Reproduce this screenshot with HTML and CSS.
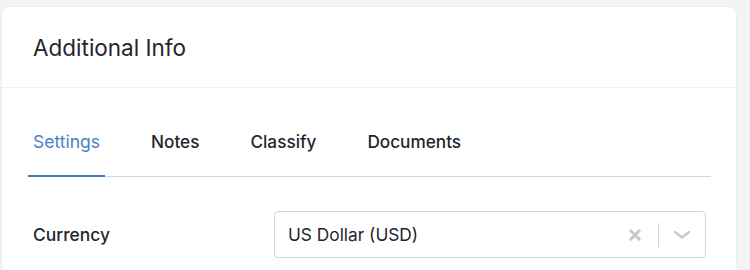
FILE: index.html
```html
<!DOCTYPE html>
<html>
<head>
<meta charset="utf-8">
<link rel="stylesheet" href="styles.css">
</head>
<body>
<div class="card">
  <div class="card-header">Additional Info</div>
  <div class="card-body">
    <div class="tabs">
      <div class="tab active">Settings</div>
      <div class="tab">Notes</div>
      <div class="tab">Classify</div>
      <div class="tab">Documents</div>
    </div>
    <div class="form-row">
      <label class="label">Currency</label>
      <div class="select">
        <span class="value">US Dollar (USD)</span>
        <span class="indicators">
          <svg class="clear" width="14" height="12" viewBox="0 0 14 12"><path d="M2 1 L12 11 M12 1 L2 11" stroke="currentColor" stroke-width="3" stroke-linecap="butt" fill="none"/></svg>
          <span class="sep"></span>
          <svg class="chev" width="16" height="8" viewBox="0 0 16 8"><path d="M1 1 L8 6.5 L15 1" stroke="currentColor" stroke-width="2.4" fill="none" stroke-linecap="round" stroke-linejoin="round"/></svg>
        </span>
      </div>
    </div>
  </div>
</div>
</body>
</html>
```

FILE: styles.css
```css
html, body {
  margin: 0;
  background: #f4f4f4;
  font-family: Inter, "Noto Sans", sans-serif;
  color: #23262d;
}
body {
  padding: 7px 14px 0 2px;
  height: 270px;
  box-sizing: border-box;
  overflow: hidden;
}
.card {
  background: #fff;
  border-radius: 6px;
  box-shadow: 0 0 3px rgba(0,0,0,0.06);
  height: 300px;
}
.card-header {
  height: 81px;
  box-sizing: border-box;
  padding-left: 31px;
  display: flex;
  align-items: center;
  font-size: 22.5px;
  border-bottom: 1px solid #efefef;
}
.card-body {
  padding: 23px 25px 0 26px;
}
.tabs {
  display: flex;
  gap: 41px;
  border-bottom: 1px solid #d6d6de;
}
.tab {
  padding: 19px 5px 21px;
  line-height: 24px;
  font-size: 17.2px;
  font-weight: 500;
  border-bottom: 2px solid transparent;
  margin-bottom: -1px;
}
.tab.active {
  color: #4a82c5;
  font-weight: 400;
  font-size: 17.5px;
  border-bottom-color: #3b78c2;
}
.form-row {
  display: flex;
  align-items: center;
  padding: 0 5px;
  margin-top: 34px;
}
.label {
  width: 241px;
  font-size: 17.4px;
  font-weight: 500;
}
.select {
  flex: 1;
  height: 47px;
  box-sizing: border-box;
  border: 1px solid #d3d3d3;
  border-radius: 4px;
  display: flex;
  align-items: center;
  padding-left: 13px;
}
.value {
  flex: 1;
  font-size: 17.3px;
}
.indicators {
  display: flex;
  align-items: center;
  color: #c8c8c8;
}
.clear { margin-right: 16px; }
.sep {
  width: 1px;
  height: 24px;
  background: #d3d3d3;
  margin-right: 15px;
}
.chev { margin-right: 15px; }
```
